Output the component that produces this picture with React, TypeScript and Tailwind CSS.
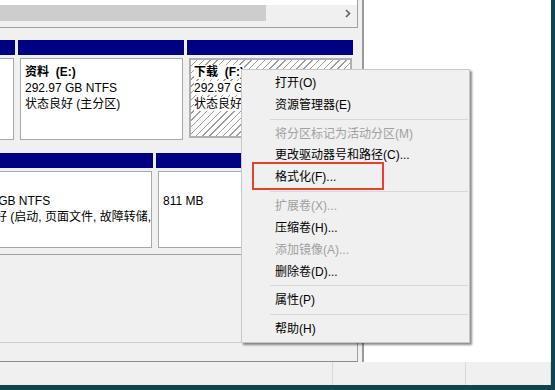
import React from "react";

const FONT = "font-['Liberation_Sans','Noto_Sans_CJK_SC',sans-serif]";

type Item = { label: string; disabled?: boolean } | "sep";

const menuItems: Item[] = [
  { label: "打开(O)" },
  { label: "资源管理器(E)" },
  "sep",
  { label: "将分区标记为活动分区(M)", disabled: true },
  { label: "更改驱动器号和路径(C)..." },
  { label: "格式化(F)..." },
  "sep",
  { label: "扩展卷(X)...", disabled: true },
  { label: "压缩卷(H)..." },
  { label: "添加镜像(A)...", disabled: true },
  { label: "删除卷(D)..." },
  "sep",
  { label: "属性(P)" },
  "sep",
  { label: "帮助(H)" },
];

function Segment({ width, children }: { width: string; children: React.ReactNode }) {
  return (
    <div className={`${width} shrink-0 flex flex-col`}>
      <div className="h-[15px] bg-[#000082]" />
      <div className="pt-[3px] pl-[2px] pr-[1px]">{children}</div>
    </div>
  );
}

function Box({ h, lines, bold }: { h: string; lines: string[]; bold?: boolean }) {
  return (
    <div className={`${h} bg-white border border-[#a8a8a8] pt-[5px] pl-[4px] leading-[16px] overflow-hidden whitespace-pre`}>
      {lines.map((l, i) => (
        <div key={i} className={i === 0 && bold ? "font-bold" : ""}>
          {l || "\u00a0"}
        </div>
      ))}
    </div>
  );
}

export default function App() {
  return (
    <div className={`relative w-[555px] h-[390px] overflow-hidden bg-[#0d4652] text-[12px] text-black ${FONT}`}>
      <div className="w-[551px] h-[385px] bg-[#f0f0f0] flex flex-col">
        <div className="flex h-[362px]">
          {/* left: volume list + disk graph */}
          <div className="w-[362px] flex flex-col">
            <div className="h-[28px] w-[358px] flex flex-col border-r border-b border-[#a0a0a0]">
              <div className="h-[5px] bg-white" />
              <div className="h-[16px] flex items-center bg-[#f0f0f0]">
                <div className="w-[266px] h-full bg-[#cdcdcd]" />
                <div className="flex-1" />
                <svg width="6" height="9" viewBox="0 0 6 9" className="mr-[6px]">
                  <path d="M1 1 L4.5 4.5 L1 8" fill="none" stroke="#606060" strokeWidth="1.6" />
                </svg>
              </div>
              <div className="flex-1 bg-[#f0f0f0]" />
            </div>

            <div className="flex-1 flex flex-col overflow-hidden">
              <div className="pt-[12px] ml-[-48px] flex flex-col">
                {/* disk 1 */}
                <div className="flex gap-[3px]">
                  <Segment width="w-[63px]">
                    <Box h="h-[82px]" lines={["", "", ""]} />
                  </Segment>
                  <Segment width="w-[166px]">
                    <Box h="h-[82px]" bold lines={["资料  (E:)", "292.97 GB NTFS", "状态良好 (主分区)"]} />
                  </Segment>
                  <Segment width="w-[166px]">
                    <div className="h-[80px] border-2 border-[#b0b0b0] bg-[image:repeating-linear-gradient(135deg,#ffffff_0px,#ffffff_3.8px,#9c9c9c_3.8px,#9c9c9c_4.8px)] pt-[4px] pl-[3px] leading-[16px] whitespace-pre">
                      <div><span className="bg-white font-bold">下载  (F:)</span></div>
                      <div><span className="bg-white">292.97 GB NTFS</span></div>
                      <div><span className="bg-white">状态良好 (主分区)</span></div>
                    </div>
                  </Segment>
                </div>

                {/* disk 2 */}
                <div className="flex gap-[3px] mt-[13px]">
                  <Segment width="w-[201px]">
                    <Box h="h-[77px]" lines={["", "118.45 GB NTFS", "状态良好 (启动, 页面文件, 故障转储, 基本数据分区)"]} />
                  </Segment>
                  <Segment width="w-[197px]">
                    <Box h="h-[77px]" lines={["", "811 MB", ""]} />
                  </Segment>
                </div>
                <div className="mt-[6px] h-px w-[410px] bg-[#a0a0a0]" />
              </div>

              <div className="mt-auto h-[20px] w-[358px] border-t border-t-[#cdcdcd] border-r border-r-[#a0a0a0] border-b border-b-[#8c8c8c]" />
            </div>
          </div>

          {/* right: blank pane */}
          <div className="flex-1 bg-white border-l-2 border-[#9a9a9a]" />
        </div>

        {/* status bar */}
        <div className="h-[23px] flex bg-[#f0f0f0]">
          <div className="w-[333px] border-r border-[#d9d9d9]" />
          <div className="w-[133px] border-r border-[#d9d9d9]" />
          <div className="flex-1 border-r border-[#d9d9d9]" />
        </div>
      </div>

      {/* context menu */}
      <div className="absolute left-[241px] top-[69px] w-[229px] h-[274px] bg-[#f0f0f0] border border-[#c8c8c8] shadow-[2px_2px_2px_rgba(0,0,0,0.45)] py-[2px] flex flex-col">
        {menuItems.map((it, i) =>
          it === "sep" ? (
            <div key={i} className="h-[7px] flex items-center ml-[28px] mr-[1px]">
              <div className="h-px w-full bg-[#d7d7d7]" />
            </div>
          ) : (
            <div
              key={i}
              className={`h-[22px] flex items-center pl-[33px] whitespace-nowrap ${it.disabled ? "text-[#a0a0a0]" : "text-black"}`}
            >
              {it.label}
            </div>
          )
        )}
      </div>

      {/* annotation */}
      <div className="absolute left-[252px] top-[162px] w-[132px] h-[28px] border-2 border-[#e5412f]" />
    </div>
  );
}
